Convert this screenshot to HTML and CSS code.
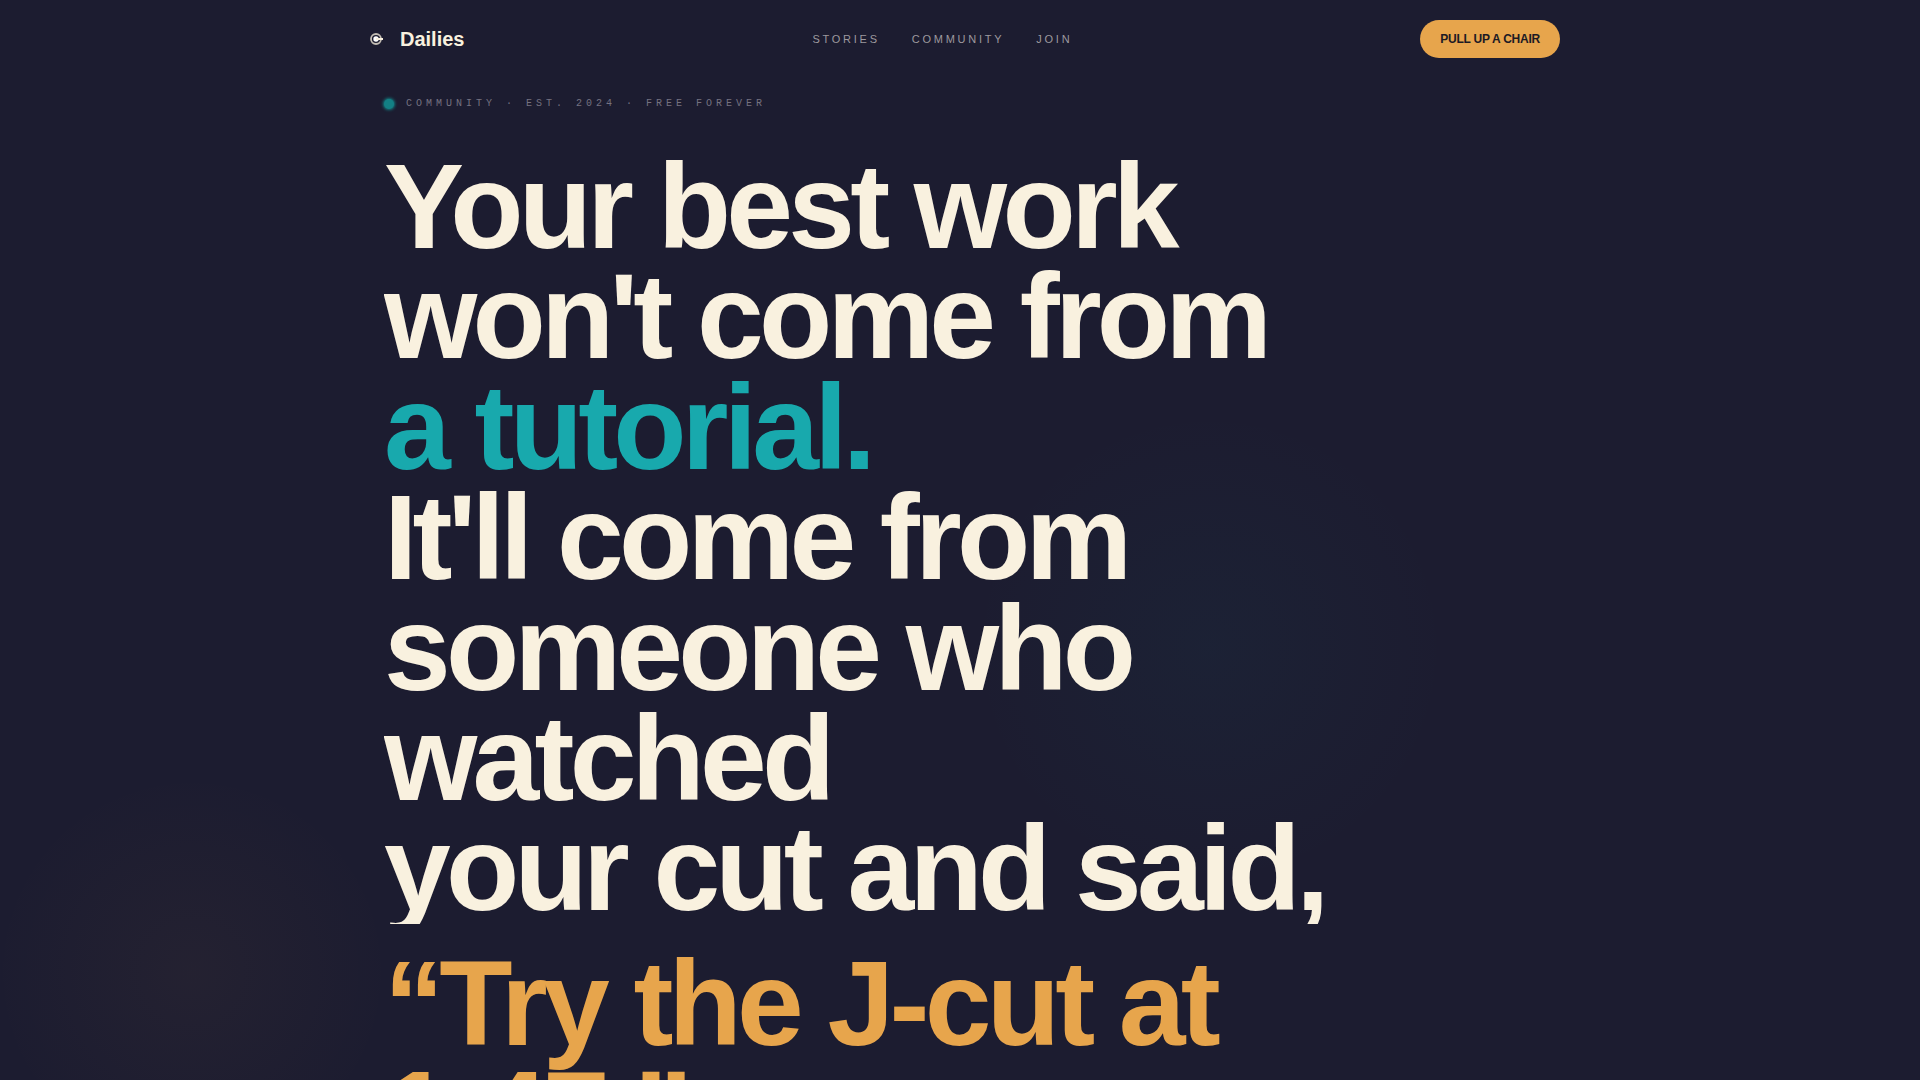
FILE: index.html
```html
<!DOCTYPE html>
<html lang="en">
<head>
<meta charset="utf-8">
<meta name="viewport" content="width=device-width, initial-scale=1">
<title>Dailies</title>
<link rel="stylesheet" href="styles.css">
</head>
<body>
<header class="nav">
  <a class="brand" href="#">
    <svg class="brand-mark" viewBox="0 0 32 32" aria-hidden="true">
      <circle cx="16" cy="16" r="5" fill="none" stroke="#f9f1df" stroke-opacity=".75" stroke-width="1.8"/>
      <circle cx="16" cy="16" r="2.7" fill="#fff"/>
      <path d="M16 16h7" stroke="#f9f1df" stroke-width="2"/>
    </svg>
    <span>Dailies</span>
  </a>
  <nav class="links" aria-label="Main">
    <a href="#stories">Stories</a>
    <a href="#community">Community</a>
    <a href="#join">Join</a>
  </nav>
  <button class="cta" type="button">Pull up a chair</button>
</header>
<main class="hero">
  <p class="eyebrow"><span class="dot"></span>Community · Est. 2024 · Free forever</p>
  <h1 class="headline">
    <span class="lead">
      <span class="line">Your best work</span>
      <span class="line">won't come from</span>
      <span class="line teal">a tutorial.</span>
      <span class="line">It'll come from</span>
      <span class="line">someone who watched</span>
      <span class="line">your cut and said,</span>
    </span>
    <span class="quote">“Try the J-cut at 1:47.”</span>
  </h1>
</main>
</body>
</html>
```

FILE: styles.css
```css
* { box-sizing: border-box; }

body {
  margin: 0;
  height: 100vh;
  overflow: hidden;
  color: #f9f1df;
  font-family: "Liberation Sans", Arial, sans-serif;
  background:
    radial-gradient(circle at 10% 90%, rgba(232, 164, 76, .04), transparent 200px),
    radial-gradient(circle at 63% 60%, rgba(24, 169, 173, .04), transparent 240px),
    #1c1c30;
}

a { color: inherit; text-decoration: none; }

.nav {
  display: flex;
  justify-content: space-between;
  align-items: center;
  max-width: 1200px;
  margin: 0 auto;
  padding: 20px 0;
}

.brand {
  display: flex;
  align-items: center;
  gap: 8px;
  font-size: 20px;
  line-height: 24px;
  font-weight: 700;
}

.brand-mark { width: 32px; height: 32px; }

.links {
  display: flex;
  gap: 32px;
  font-size: 11px;
  line-height: 16px;
  letter-spacing: .25em;
  text-transform: uppercase;
  color: #9c999e;
}

.cta {
  height: 38px;
  padding: 0 20px;
  border: 0;
  border-radius: 20px;
  background: #e7a54c;
  color: #1c1a24;
  font: 700 12px/16px "Liberation Sans", Arial, sans-serif;
  letter-spacing: -.02em;
  text-transform: uppercase;
}

.hero {
  max-width: 1200px;
  margin: 0 auto;
  padding: 16px 24px 0;
}

.eyebrow {
  display: flex;
  align-items: center;
  gap: 12px;
  margin: 0 0 38px;
  font: 10px/19px "Liberation Mono", monospace;
  letter-spacing: .4em;
  text-transform: uppercase;
  color: #757280;
}

.dot {
  width: 10px;
  height: 10px;
  border-radius: 50%;
  background: #138084;
  box-shadow: 0 0 3px 1px #138084;
}

.headline {
  max-width: 1000px;
  margin: 0;
  font-size: 120px;
  line-height: .92;
  letter-spacing: -.04em;
  font-weight: 700;
}

.lead { display: block; overflow: hidden; }
.line { display: block; }
.teal { color: #18a9ad; }

.quote {
  display: block;
  margin-top: 24px;
  color: #e7a54c;
}
```
